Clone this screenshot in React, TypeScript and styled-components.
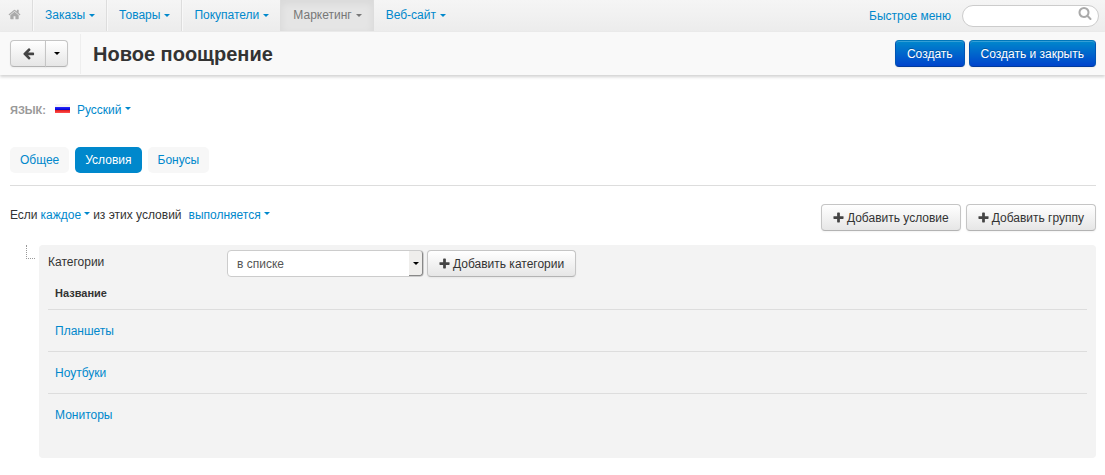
import React from "react";
import styled, { createGlobalStyle, css } from "styled-components";

const link = "#0088cc";
const line = "#dddddd";

const GlobalStyle = createGlobalStyle`
  *, *::before, *::after { box-sizing: border-box; }
  body {
    margin: 0;
    background: #fff;
    color: #333;
    font: 12px/20px "Liberation Sans", Arial, sans-serif;
  }
  button, input, select { font: inherit; color: inherit; margin: 0; }
  a { color: ${link}; text-decoration: none; }
`;

const TopBar = styled.header`
  display: flex;
  justify-content: space-between;
  height: 32px;
  background: linear-gradient(#f5f5f5, #ececec);
`;

const Menu = styled.nav`
  display: flex;
  height: 31px;
`;

const MenuLink = styled.a<{ $active?: boolean; $last?: boolean }>`
  display: flex;
  align-items: center;
  gap: 4px;
  padding: 0 11px 1px 12px;
  border-right: 1px solid ${(p) => (p.$last ? "transparent" : line)};
  box-shadow: ${(p) => (p.$last ? "none" : "1px 0 0 #f8f8f8")};
  ${(p) =>
    p.$active &&
    css`
      color: #777;
      background: #e5e5e5;
      box-shadow: inset 0 3px 8px rgba(0, 0, 0, 0.06);
    `}
`;

const HomeLink = styled(MenuLink)`
  padding: 0 11px 2px 8px;
  color: #aaa;
`;

const Caret = styled.span<{ $raised?: boolean }>`
  flex: none;
  border: 3px solid transparent;
  border-top-color: currentColor;
  border-bottom: 0;
  margin-bottom: ${(p) => (p.$raised ? "4px" : "0")};
`;

const Tools = styled.div`
  display: flex;
  align-items: center;
  gap: 11px;
  padding-right: 6px;
`;

const SearchBox = styled.label`
  display: flex;
  align-items: flex-start;
  width: 137px;
  height: 22px;
  padding: 0 6px 0 10px;
  border: 1px solid #ccc;
  border-radius: 11px;
  background: #fff;
  color: #aaa;
`;

const SearchInput = styled.input`
  flex: 1;
  min-width: 0;
  height: 18px;
  padding: 0;
  border: 0;
  outline: 0;
  background: none;
  color: #555;
`;

const ActionBar = styled.div`
  display: flex;
  align-items: center;
  height: 43px;
  padding: 0 9px 0 10px;
  background: #f9f9f9;
  box-shadow: 0 2px 3px rgba(0, 0, 0, 0.18);
`;

const Title = styled.h1`
  flex: 1;
  margin: 0 0 0 12px;
  padding-left: 12px;
  border-left: 1px solid #eee;
  font-size: 20px;
  line-height: 40px;
`;

const Button = styled.button<{ $primary?: boolean }>`
  display: inline-flex;
  align-items: center;
  justify-content: center;
  gap: 3px;
  height: 27px;
  padding: 0 11px;
  border: 1px solid #c5c5c5;
  border-bottom-color: #b3b3b3;
  border-radius: 4px;
  background: linear-gradient(#fff, #e6e6e6);
  box-shadow: inset 0 1px 0 rgba(255, 255, 255, 0.2), 0 1px 2px rgba(0, 0, 0, 0.05);
  white-space: nowrap;
  cursor: pointer;
  svg { color: #444; }
  ${(p) =>
    p.$primary &&
    css`
      color: #fff;
      border-color: #0077bb #0055b3 #003a9c;
      background: linear-gradient(#0088cc, #0044cc);
      text-shadow: 0 -1px 0 rgba(0, 0, 0, 0.25);
    `}
`;

const Split = styled.div`
  display: flex;
`;

const BackButton = styled(Button)`
  width: 36px;
  padding: 0;
  border-radius: 4px 0 0 4px;
`;

const BackToggle = styled(Button)`
  width: 23px;
  margin-left: -1px;
  padding: 0;
  border-radius: 0 4px 4px 0;
  color: #000;
`;

const ButtonRow = styled.div<{ $gap: number }>`
  display: flex;
  gap: ${(p) => p.$gap}px;
`;

const Content = styled.main`
  padding: 25px 9px 16px 10px;
`;

const Language = styled.div`
  display: flex;
  align-items: center;
`;

const LanguageLabel = styled.span`
  width: 45px;
  color: #999;
  font-size: 11px;
  font-weight: bold;
`;

const Flag = styled.svg`
  width: 15px;
  height: 10px;
  margin: 0 7px 2px 0;
`;

const Choice = styled.a`
  display: inline-flex;
  align-items: center;
  gap: 3px;
`;

const Tabs = styled.nav`
  display: flex;
  gap: 6px;
  margin-top: 27px;
  padding-bottom: 12px;
  border-bottom: 1px solid ${line};
`;

const Tab = styled.a<{ $active?: boolean }>`
  padding: 3px 10px;
  border-radius: 5px;
  color: ${(p) => (p.$active ? "#fff" : link)};
  background: ${(p) => (p.$active ? link : "#f7f7f7")};
`;

const Rule = styled.div`
  display: flex;
  justify-content: space-between;
  margin-top: 18px;
`;

const Sentence = styled.div`
  display: flex;
  align-items: center;
  gap: 3px;
  height: 22px;
`;

const LastChoice = styled(Choice)`
  margin-left: 4px;
`;

const Conditions = styled.div`
  display: flex;
  margin-top: 14px;
  padding-left: 16px;
`;

const Branch = styled.span`
  width: 9px;
  height: 14px;
  margin-right: 4px;
  border: 1px dotted #999;
  border-width: 0 0 1px 1px;
`;

const Panel = styled.section`
  flex: 1;
  padding: 5px 9px 23px;
  border-radius: 4px;
  background: #f3f3f3;
`;

const Field = styled.div`
  display: grid;
  grid-template-columns: 179px 197px auto;
  justify-content: start;
  align-items: center;
`;

const FieldLabel = styled.label`
  padding-bottom: 3px;
`;

const SelectWrap = styled.div`
  position: relative;
`;

const Select = styled.select`
  display: block;
  width: 100%;
  height: 27px;
  padding: 0 24px 0 9px;
  border: 1px solid #ccc;
  border-radius: 4px;
  background: #fff;
  color: #555;
  appearance: none;
`;

const SelectArrow = styled.span`
  position: absolute;
  top: 1px;
  right: 1px;
  bottom: 1px;
  display: flex;
  align-items: center;
  justify-content: center;
  width: 14px;
  border: 1px solid #888;
  border-width: 0 1px 1px 0;
  border-radius: 0 3px 3px 0;
  background: #efeeec;
  color: #000;
  pointer-events: none;
`;

const FieldAction = styled(Button)`
  margin-left: 3px;
`;

const Table = styled.table`
  width: 100%;
  border-collapse: collapse;
  text-align: left;
`;

const HeadCell = styled.th`
  height: 32px;
  padding: 0 7px;
  font-size: 11px;
`;

const Cell = styled.td`
  height: 42px;
  padding: 2px 7px 0;
  border-top: 1px solid ${line};
`;

const Glyph = styled.svg`
  flex: none;
  fill: currentColor;
`;

const glyphs = {
  home: {
    box: "0 0 1792 1792",
    d: "M1472 992v480q0 26-19 45t-45 19h-384v-384h-256v384h-384q-26 0-45-19t-19-45v-480q0-1 .5-3t.5-3l575-474 575 474q1 2 1 6zm223-69l-62 74q-8 9-21 11h-3q-13 0-21-7l-692-577-692 577q-12 8-24 7-13-2-21-11l-62-74q-8-10-7-23.5t11-21.5l719-599q32-26 76-26t76 26l244 204v-195q0-14 9-23t23-9h192q14 0 23 9t9 23v408l219 182q10 8 11 21.5t-7 23.5z",
  },
  back: {
    box: "0 0 1792 1792",
    d: "M1664 896v128q0 53-32.5 90.5t-84.5 37.5h-704l293 294q38 36 38 90t-38 90l-75 76q-37 37-90 37-52 0-91-37l-651-652q-37-37-37-90 0-52 37-91l651-650q38-38 91-38 52 0 90 38l75 74q38 38 38 91t-38 91l-293 293h704q52 0 84.5 37.5t32.5 90.5z",
  },
  plus: {
    box: "128 64 1536 1536",
    d: "M1600 736v192q0 40-28 68t-68 28h-416v416q0 40-28 68t-68 28h-192q-40 0-68-28t-28-68v-416h-416q-40 0-68-28t-28-68v-192q0-40 28-68t68-28h416v-416q0-40 28-68t68-28h192q40 0 68 28t28 68v416h416q40 0 68 28t28 68z",
  },
  search: {
    box: "0 0 1792 1792",
    d: "M1216 832q0-185-131.5-316.5t-316.5-131.5-316.5 131.5-131.5 316.5 131.5 316.5 316.5 131.5 316.5-131.5 131.5-316.5zm512 832q0 52-38 90t-90 38q-54 0-90-38l-343-342q-179 124-399 124-143 0-273.5-55.5t-225-150-150-225-55.5-273.5 55.5-273.5 150-225 225-150 273.5-55.5 273.5 55.5 225 150 150 225 55.5 273.5q0 220-124 399l343 343q37 37 37 90z",
  },
};

const Icon = ({ name, size }: { name: keyof typeof glyphs; size: number }) => (
  <Glyph width={size} height={size} viewBox={glyphs[name].box} aria-hidden="true">
    <path d={glyphs[name].d} />
  </Glyph>
);

const menu = ["Заказы", "Товары", "Покупатели", "Маркетинг", "Веб-сайт"];
const categories = ["Планшеты", "Ноутбуки", "Мониторы"];

export default function App() {
  return (
    <>
      <GlobalStyle />
      <TopBar>
        <Menu>
          <HomeLink href="#" aria-label="Главная">
            <Icon name="home" size={13} />
          </HomeLink>
          {menu.map((item, i) => (
            <MenuLink key={item} href="#" $active={item === "Маркетинг"} $last={i === menu.length - 1}>
              {item}
              <Caret />
            </MenuLink>
          ))}
        </Menu>
        <Tools>
          <a href="#">Быстрое меню</a>
          <SearchBox>
            <SearchInput type="text" aria-label="Поиск" />
            <Icon name="search" size={14} />
          </SearchBox>
        </Tools>
      </TopBar>

      <ActionBar>
        <Split>
          <BackButton type="button" aria-label="Назад">
            <Icon name="back" size={13} />
          </BackButton>
          <BackToggle type="button" aria-label="История">
            <Caret />
          </BackToggle>
        </Split>
        <Title>Новое поощрение</Title>
        <ButtonRow $gap={4}>
          <Button type="button" $primary>Создать</Button>
          <Button type="button" $primary>Создать и закрыть</Button>
        </ButtonRow>
      </ActionBar>

      <Content>
        <Language>
          <LanguageLabel>ЯЗЫК:</LanguageLabel>
          <Flag viewBox="0 0 15 10" aria-hidden="true">
            <defs>
              <linearGradient id="blue" x2="0" y2="1">
                <stop offset="0" stopColor="#2a2aff" />
                <stop offset="1" stopColor="#0000d0" />
              </linearGradient>
              <linearGradient id="red" x2="0" y2="1">
                <stop offset="0" stopColor="#e01818" />
                <stop offset="1" stopColor="#ff5050" />
              </linearGradient>
            </defs>
            <path fill="#f4f4f4" d="M0 0h15v3H0z" />
            <path fill="url(#blue)" d="M0 3h15v3H0z" />
            <path fill="url(#red)" d="M0 6h15v3H0z" />
          </Flag>
          <Choice href="#">
            Русский
            <Caret $raised />
          </Choice>
        </Language>

        <Tabs>
          <Tab href="#">Общее</Tab>
          <Tab href="#" $active>Условия</Tab>
          <Tab href="#">Бонусы</Tab>
        </Tabs>

        <Rule>
          <Sentence>
            Если
            <Choice href="#">
              каждое
              <Caret $raised />
            </Choice>
            из этих условий
            <LastChoice href="#">
              выполняется
              <Caret $raised />
            </LastChoice>
          </Sentence>
          <ButtonRow $gap={5}>
            <Button type="button">
              <Icon name="plus" size={11} />
              Добавить условие
            </Button>
            <Button type="button">
              <Icon name="plus" size={11} />
              Добавить группу
            </Button>
          </ButtonRow>
        </Rule>

        <Conditions>
          <Branch />
          <Panel>
            <Field>
              <FieldLabel htmlFor="operator">Категории</FieldLabel>
              <SelectWrap>
                <Select id="operator">
                  <option>в списке</option>
                </Select>
                <SelectArrow>
                  <Caret />
                </SelectArrow>
              </SelectWrap>
              <FieldAction type="button">
                <Icon name="plus" size={11} />
                Добавить категории
              </FieldAction>
            </Field>
            <Table>
              <thead>
                <tr>
                  <HeadCell scope="col">Название</HeadCell>
                </tr>
              </thead>
              <tbody>
                {categories.map((name) => (
                  <tr key={name}>
                    <Cell>
                      <a href="#">{name}</a>
                    </Cell>
                  </tr>
                ))}
              </tbody>
            </Table>
          </Panel>
        </Conditions>
      </Content>
    </>
  );
}
